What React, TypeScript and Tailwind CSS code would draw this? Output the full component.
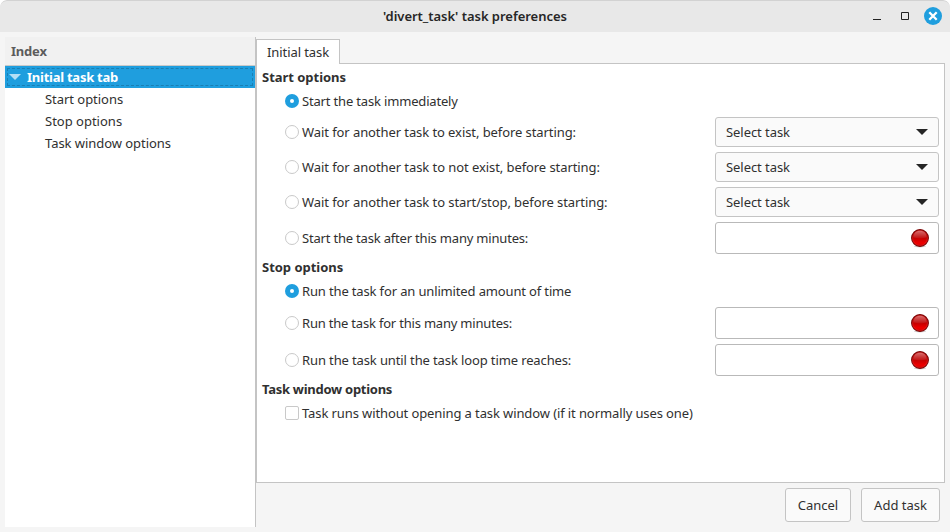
import type { ReactNode } from 'react';

function RadioMark({ checked = false }: { checked?: boolean }) {
  return checked ? (
    <span className="flex size-3.5 shrink-0 items-center justify-center rounded-full bg-[#1f9ede]">
      <span className="size-1 rounded-full bg-white" />
    </span>
  ) : (
    <span className="size-3.5 shrink-0 rounded-full border border-[#c9c9c9] bg-white" />
  );
}

function Heading({ className, children }: { className: string; children: ReactNode }) {
  return <h2 className={`flex h-[26px] items-center pl-[4px] font-bold ${className}`}>{children}</h2>;
}

function OptionRow({ className, mark, label, control }: { className: string; mark: ReactNode; label: string; control?: ReactNode }) {
  return (
    <div className={`flex items-center justify-between ${control ? 'mt-[5px]' : 'h-[22px]'}`}>
      <label className="flex items-center gap-[3px] pl-[27px]">
        {mark}
        <span className={className}>{label}</span>
      </label>
      {control}
    </div>
  );
}

function SelectTask() {
  return (
    <button className="flex h-[30px] w-[224px] items-center justify-between rounded-[3px] border border-[#c4c4c4] bg-[#fafafa] pl-2.5 pr-2.5">
      <span className="tracking-[-0.06px]">Select task</span>
      <svg width="12" height="6" viewBox="0 0 12 6" className="-mt-px">
        <path d="M0 0h12L6 6z" fill="#252525" />
      </svg>
    </button>
  );
}

function Entry() {
  return (
    <div className="flex h-8 w-[224px] items-center justify-end rounded-[3px] border border-[#b9b9b9] bg-white pr-[9px]">
      <svg width="18" height="19" viewBox="0 0 18 19" className="mt-px">
        <defs>
          <linearGradient id="bulb" x1="0" y1="0" x2="0" y2="1">
            <stop offset="0" stopColor="#b80000" />
            <stop offset="0.45" stopColor="#bd0000" />
            <stop offset="0.8" stopColor="#ee0000" />
            <stop offset="1" stopColor="#c80000" />
          </linearGradient>
          <linearGradient id="shine" x1="0" y1="0" x2="0" y2="1">
            <stop offset="0" stopColor="#fff" stopOpacity="0.42" />
            <stop offset="1" stopColor="#fff" stopOpacity="0.06" />
          </linearGradient>
        </defs>
        <ellipse cx="9" cy="17.2" rx="6" ry="1.3" fill="#000" opacity="0.18" />
        <circle cx="9" cy="9" r="8.4" fill="url(#bulb)" stroke="#7a0a0a" strokeWidth="1.1" />
        <circle cx="9" cy="9" r="7.4" fill="none" stroke="#ff5050" strokeWidth="0.7" opacity="0.35" />
        <path d="M2.4 8.6C2.4 4.4 5.2 1.8 9 1.8s6.6 2.6 6.6 6.8C12 9.6 6 9.6 2.4 8.6z" fill="url(#shine)" />
      </svg>
    </div>
  );
}

function Sidebar() {
  return (
    <aside className="h-[490px] w-[251px] shrink-0 border-r border-[#c4c4c4] bg-white">
      <div className="flex h-[29px] items-center border-b border-[#c9c9c9] bg-[#f1f1f1] pl-1.5 font-bold tracking-[-0.2px] text-[#5c5c5c]">Index</div>
      <div className="h-[22px] bg-[#1f9ede] p-[2px]">
        <div className="flex h-[18px] items-center border border-dashed border-[#1a7fb3] font-bold tracking-[-0.25px] text-white">
          <svg width="12" height="6" viewBox="0 0 12 6" className="ml-px mr-[6px] -mt-px">
            <path d="M0 0h12L6 6z" fill="#b4dff5" />
          </svg>
          Initial task tab
        </div>
      </div>
      <div className="flex h-[22px] items-center pl-10 tracking-[-0.04px]">Start options</div>
      <div className="flex h-[22px] items-center pl-10">Stop options</div>
      <div className="flex h-[22px] items-center pl-10 tracking-[-0.05px]">Task window options</div>
    </aside>
  );
}

export default function App() {
  return (
    <div className="h-[532px] w-[950px] bg-white font-['Noto_Sans',sans-serif] text-[13px] leading-[18px] whitespace-nowrap text-[#303030]">
      <div className="flex h-full flex-col overflow-hidden rounded-t-[7px] bg-[#f5f5f5]">
        <header className="grid h-8 shrink-0 grid-cols-[1fr_auto_1fr] items-center rounded-t-[7px] border-t border-[#d2d2d2] bg-[#e8e8e8]">
          <span />
          <h1 className="pb-0.5 font-semibold tracking-[-0.03px] text-[#262626]">'divert_task' task preferences</h1>
          <div className="flex items-center justify-end pr-2 pb-px">
            <svg width="8" height="9" viewBox="0 0 8 9" className="mr-5">
              <path d="M0 7.5h8" stroke="#222" />
            </svg>
            <svg width="8" height="8" viewBox="0 0 8 8" className="mr-[15px]">
              <path d="M.5 .5h7v7h-7z" fill="none" stroke="#222" />
            </svg>
            <svg width="18" height="18" viewBox="0 0 18 18">
              <circle cx="9" cy="9" r="9" fill="#1f9ede" />
              <path d="M5.300 5.300l7.400 7.400M12.700 5.300l-7.400 7.400" stroke="#fff" strokeWidth="2.300" />
            </svg>
          </div>
        </header>
        <div className="flex flex-1 px-[5px] pt-[5px]">
          <Sidebar />
          <main className="flex flex-1 flex-col pt-[2px]">
            <div className="z-10 -mb-px flex h-[25px] w-[84px] items-center border border-b-0 border-[#c4c4c4] bg-white pl-2.5 tracking-[-0.08px]">Initial task</div>
            <section className="h-[420px] border border-[#c4c4c4] bg-white pl-px pr-[5px]">
              <Heading className="tracking-[-0.03px]">Start options</Heading>
              <OptionRow className="tracking-[-0.17px]" mark={<RadioMark checked />} label="Start the task immediately" />
              <OptionRow className="tracking-[-0.08px]" mark={<RadioMark />} label="Wait for another task to exist, before starting:" control={<SelectTask />} />
              <OptionRow className="tracking-[-0.075px]" mark={<RadioMark />} label="Wait for another task to not exist, before starting:" control={<SelectTask />} />
              <OptionRow className="tracking-[-0.075px]" mark={<RadioMark />} label="Wait for another task to start/stop, before starting:" control={<SelectTask />} />
              <OptionRow className="tracking-[-0.19px]" mark={<RadioMark />} label="Start the task after this many minutes:" control={<Entry />} />
              <Heading className="tracking-[-0.03px]">Stop options</Heading>
              <OptionRow className="tracking-[-0.145px]" mark={<RadioMark checked />} label="Run the task for an unlimited amount of time" />
              <OptionRow className="tracking-[-0.2px]" mark={<RadioMark />} label="Run the task for this many minutes:" control={<Entry />} />
              <OptionRow className="tracking-[-0.12px]" mark={<RadioMark />} label="Run the task until the task loop time reaches:" control={<Entry />} />
              <Heading className="tracking-[-0.27px]">Task window options</Heading>
              <OptionRow
                className="tracking-[-0.105px]"
                mark={<span className="size-3.5 shrink-0 rounded-[2px] border border-[#c9c9c9] bg-white" />}
                label="Task runs without opening a task window (if it normally uses one)"
              />
            </section>
            <footer className="flex justify-end gap-2.5 pt-[5px] pr-[5px]">
              <button className="h-[34px] w-[66px] rounded-[3px] border border-[#c4c4c4] bg-[#fafafa]">Cancel</button>
              <button className="h-[34px] w-[79px] rounded-[3px] border border-[#c4c4c4] bg-[#fafafa]">Add task</button>
            </footer>
          </main>
        </div>
      </div>
    </div>
  );
}
